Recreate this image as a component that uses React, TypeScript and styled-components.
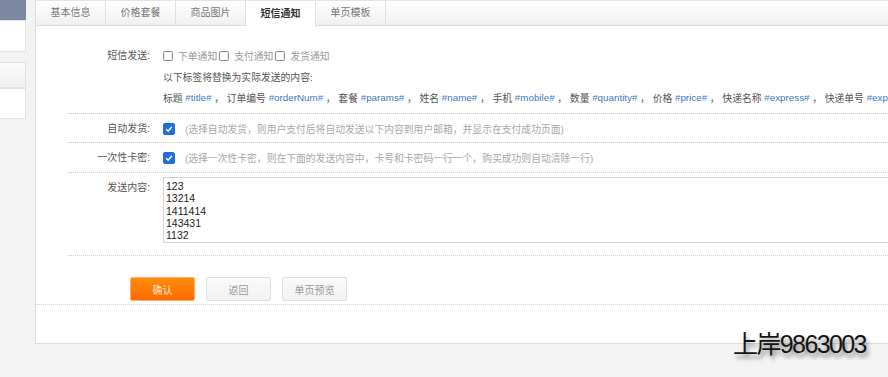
import React from 'react';
import styled, { createGlobalStyle } from 'styled-components';

const GlobalStyle = createGlobalStyle`
  html, body {
    margin: 0;
    padding: 0;
    background: #f3f3f3;
    overflow: hidden;
  }
  body {
    font-family: "Liberation Sans", "Noto Sans CJK SC", sans-serif;
    font-size: 10px;
    color: #666;
  }
`;

const Page = styled.div`
  position: relative;
  display: flex;
  align-items: flex-start;
  width: 888px;
  height: 377px;
  overflow: hidden;
`;

const Sidebar = styled.div`
  width: 26px;
  flex: none;
  display: flex;
  flex-direction: column;
`;

const SideHead = styled.div`
  height: 20px;
  background: #7c87a1;
`;

const SideBox = styled.div<{ $height: number; $shade?: boolean; $gap?: number }>`
  height: ${(p) => p.$height}px;
  margin-top: ${(p) => p.$gap ?? 0}px;
  box-sizing: border-box;
  border: 1px solid #e2e2e2;
  border-left: none;
  background: ${(p) => (p.$shade ? 'linear-gradient(#fafafa, #f1f1f1)' : '#fff')};
`;

const Panel = styled.div`
  margin-left: 9px;
  width: 900px;
  flex: none;
  height: 344px;
  box-sizing: border-box;
  background: #fff;
  border: 1px solid #dcdcdc;
  border-top: none;
  overflow: hidden;
`;

const TabBar = styled.div`
  display: flex;
  height: 26px;
  box-sizing: border-box;
  background: linear-gradient(#ffffff, #f0f0f0);
  border-top: 1px solid #e4e4e4;
  border-bottom: 1px solid #dcdcdc;
`;

const Tab = styled.div<{ $active?: boolean }>`
  width: 70px;
  box-sizing: border-box;
  text-align: center;
  line-height: 24px;
  border-right: 1px solid #e0e0e0;
  color: ${(p) => (p.$active ? '#333' : '#777')};
  font-weight: ${(p) => (p.$active ? 'bold' : 'normal')};
  background: ${(p) => (p.$active ? '#fff' : 'transparent')};
  height: ${(p) => (p.$active ? '25px' : '24px')};
  margin-top: ${(p) => (p.$active ? '1px' : '0')};
`;

const Form = styled.div`
  padding-top: 1px;
`;

const Row = styled.div<{ $padTop: number; $padBottom: number }>`
  display: flex;
  margin-left: 32px;
  padding: ${(p) => p.$padTop}px 0 ${(p) => p.$padBottom}px;
  border-bottom: 1px dotted #cfcfcf;
`;

const Label = styled.div`
  width: 82px;
  flex: none;
  text-align: right;
  line-height: 21px;
  color: #555;
`;

const Field = styled.div`
  padding-left: 13px;
  flex: 1;
  min-width: 0;
  font-size: 9.8px;
  color: #555;
`;

const Line = styled.div`
  display: flex;
  align-items: center;
  height: 21px;
  white-space: pre;
`;

const Box = styled.span<{ $checked?: boolean }>`
  display: inline-flex;
  align-items: center;
  justify-content: center;
  box-sizing: border-box;
  width: ${(p) => (p.$checked ? 12 : 10)}px;
  height: ${(p) => (p.$checked ? 12 : 10)}px;
  border-radius: 2px;
  border: 1px solid ${(p) => (p.$checked ? '#1e6fd9' : '#8a8a8a')};
  background: ${(p) => (p.$checked ? '#1e6fd9' : '#fff')};
  margin-right: 5px;
  flex: none;
`;

const Option = styled.span`
  color: #999;
  margin-right: 2px;
`;

const Tag = styled.span`
  color: #3a78c3;
`;

const Hint = styled.span`
  color: #a8a8a8;
  margin-left: 5px;
`;

const TextArea = styled.textarea`
  display: block;
  width: 760px;
  height: 66px;
  box-sizing: border-box;
  border: 1px solid #d4d4d4;
  padding: 2px 2px;
  font-family: "Liberation Sans", Arial, sans-serif;
  font-size: 10.5px;
  line-height: 12.3px;
  color: #222;
  resize: none;
  outline: none;
`;

const Actions = styled.div`
  display: flex;
  gap: 11px;
  padding: 21px 0 3px 94px;
  border-bottom: 1px dotted #d6d6d6;
`;

const Button = styled.button<{ $primary?: boolean }>`
  width: 65px;
  height: 24px;
  box-sizing: border-box;
  border-radius: 2px;
  font-family: inherit;
  font-size: 10px;
  cursor: pointer;
  border: 1px solid ${(p) => (p.$primary ? '#ffb066' : '#dedede')};
  background: ${(p) => (p.$primary ? 'linear-gradient(#ff8c0a, #ff6a00)' : 'linear-gradient(#fafafa, #f2f2f2)')};
  color: ${(p) => (p.$primary ? '#ffe8d0' : '#999')};
`;

const Watermark = styled.div`
  position: absolute;
  left: 733px;
  top: 329px;
  font-family: "Liberation Sans", "Noto Sans CJK SC", sans-serif;
  font-size: 25px;
  line-height: 30px;
  letter-spacing: -1.6px;
  color: #151515;
  text-shadow: 2px 4px 4px rgba(0, 0, 0, 0.45);
  white-space: nowrap;
`;

const Check = () => (
  <svg width="8" height="8" viewBox="0 0 8 8">
    <path d="M1.2 4.2 L3.2 6.1 L6.9 1.8" fill="none" stroke="#fff" strokeWidth="1.5" />
  </svg>
);

const tags: [string, string][] = [
  ['标题', '#title#'],
  ['订单编号', '#orderNum#'],
  ['套餐', '#params#'],
  ['姓名', '#name#'],
  ['手机', '#mobile#'],
  ['数量', '#quantity#'],
  ['价格', '#price#'],
  ['快递名称', '#express#'],
  ['快递单号', '#expressNum#'],
];

const tabs = ['基本信息', '价格套餐', '商品图片', '短信通知', '单页模板'];

export default function App() {
  return (
    <Page>
      <GlobalStyle />
      <Sidebar>
        <SideHead />
        <SideBox $height={32} />
        <SideBox $height={26} $gap={10} $shade />
        <SideBox $height={31} />
      </Sidebar>
      <Panel>
        <TabBar>
          {tabs.map((t) => (
            <Tab key={t} $active={t === '短信通知'}>
              {t}
            </Tab>
          ))}
        </TabBar>
        <Form>
          <Row $padTop={18} $padBottom={5}>
            <Label>短信发送:</Label>
            <Field>
              <Line>
                <Box />
                <Option>下单通知</Option>
                <Box />
                <Option>支付通知</Option>
                <Box />
                <Option>发货通知</Option>
              </Line>
              <Line>以下标签将替换为实际发送的内容:</Line>
              <Line>
                {tags.map(([name, tag], i) => (
                  <React.Fragment key={tag}>
                    {i > 0 && <span> ， </span>}
                    {name} <Tag>{tag}</Tag>
                  </React.Fragment>
                ))}
              </Line>
            </Field>
          </Row>
          <Row $padTop={4} $padBottom={3}>
            <Label>自动发货:</Label>
            <Field>
              <Line>
                <Box $checked>
                  <Check />
                </Box>
                <Hint>(选择自动发货，则用户支付后将自动发送以下内容到用户邮箱，并显示在支付成功页面)</Hint>
              </Line>
            </Field>
          </Row>
          <Row $padTop={4} $padBottom={4}>
            <Label>一次性卡密:</Label>
            <Field>
              <Line>
                <Box $checked>
                  <Check />
                </Box>
                <Hint>(选择一次性卡密，则在下面的发送内容中，卡号和卡密码一行一个，购买成功则自动清除一行)</Hint>
              </Line>
            </Field>
          </Row>
          <Row $padTop={4} $padBottom={12}>
            <Label>发送内容:</Label>
            <Field>
              <TextArea defaultValue={'123\n13214\n1411414\n143431\n1132'} />
            </Field>
          </Row>
        </Form>
        <Actions>
          <Button $primary>确认</Button>
          <Button>返回</Button>
          <Button>单页预览</Button>
        </Actions>
      </Panel>
      <Watermark>上岸9863003</Watermark>
    </Page>
  );
}
